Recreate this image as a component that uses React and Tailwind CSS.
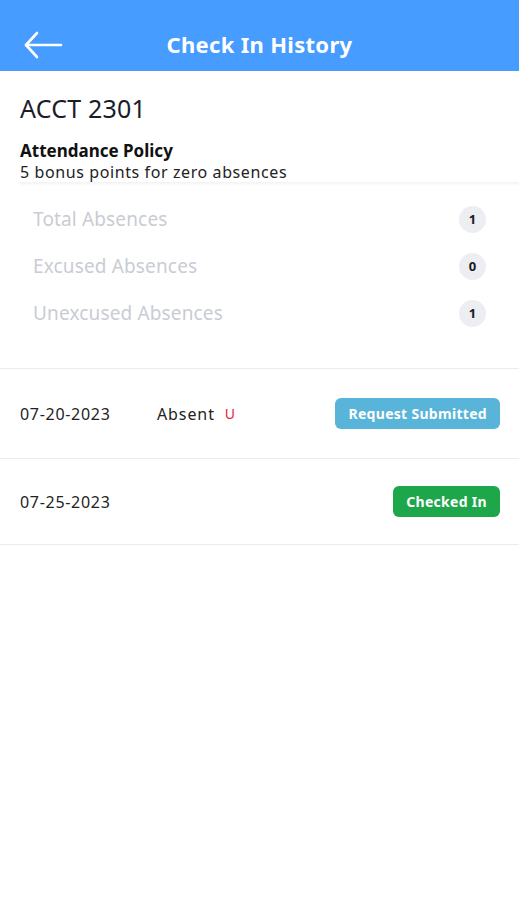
import React from "react";

const font = { fontFamily: '"Noto Sans", "DejaVu Sans", sans-serif' };

function Badge({ n }) {
  return (
    <div className="flex h-[27px] min-w-[27px] items-center justify-center rounded-full bg-[#eceef2] px-2 text-[13px] font-bold text-[#1a1a1a]">
      {n}
    </div>
  );
}

export default function App() {
  return (
    <div className="min-h-[900px] w-[519px] bg-white" style={font}>
      <header className="relative flex h-[71px] items-center justify-center bg-[#479cff] pt-[18px]">
        <svg className="absolute left-[24px] top-[31px]" width="39" height="28" viewBox="0 0 39 28" fill="none" stroke="white" strokeWidth="2.6" strokeLinecap="round" strokeLinejoin="round">
          <path d="M37 14H2" />
          <path d="M13 2L2 14l11 12" />
        </svg>
        <h1 className="text-[22px] font-bold tracking-[0.3px] text-white">Check In History</h1>
      </header>

      <section className="px-5 pt-[21px]">
        <h2 className="text-[25px] leading-[32px] tracking-[0.2px] text-[#1c1c28]">ACCT 2301</h2>
        <div className="mt-[16px] text-[17px] font-bold leading-[22px] text-[#111]">Attendance Policy</div>
        <div className="text-[16px] leading-[20px] tracking-[0.6px] text-[#222]">5 bonus points for zero absences</div>
      </section>
      <div className="ml-5 h-[4px] bg-gradient-to-b from-[#f2f2f4] to-white" />

      <section className="flex flex-col gap-[20px] pb-[41px] pl-[33px] pr-[33px] pt-[20px]">
        {[
          ["Total Absences", "1"],
          ["Excused Absences", "0"],
          ["Unexcused Absences", "1"],
        ].map(([label, n]) => (
          <div key={label} className="flex h-[27px] items-center justify-between">
            <span className="text-[19px] tracking-[0.15px] text-[#c9ccd4]">{label}</span>
            <Badge n={n} />
          </div>
        ))}
      </section>

      <div className="border-t border-[#ebebeb]" />
      <div className="flex h-[89px] items-center pl-5 pr-[19px]">
        <span className="w-[137px] text-[16px] tracking-[0.7px] text-[#222]">07-20-2023</span>
        <span className="text-[16px] tracking-[0.9px] text-[#222]">Absent</span>
        <span className="ml-[10px] text-[14px] text-[#e0254a]">U</span>
        <span className="ml-auto flex h-[31px] items-center rounded-[6px] bg-[#58b4d8] px-[13px] text-[14px] font-bold tracking-[0.3px] text-white">
          Request Submitted
        </span>
      </div>
      <div className="border-t border-[#ebebeb]" />
      <div className="flex h-[85px] items-center pl-5 pr-[19px]">
        <span className="text-[16px] tracking-[0.7px] text-[#222]">07-25-2023</span>
        <span className="ml-auto flex h-[31px] items-center rounded-[6px] bg-[#1ea64a] px-[13px] text-[14px] font-bold tracking-[0.3px] text-white">
          Checked In
        </span>
      </div>
      <div className="border-t border-[#ebebeb]" />
    </div>
  );
}
